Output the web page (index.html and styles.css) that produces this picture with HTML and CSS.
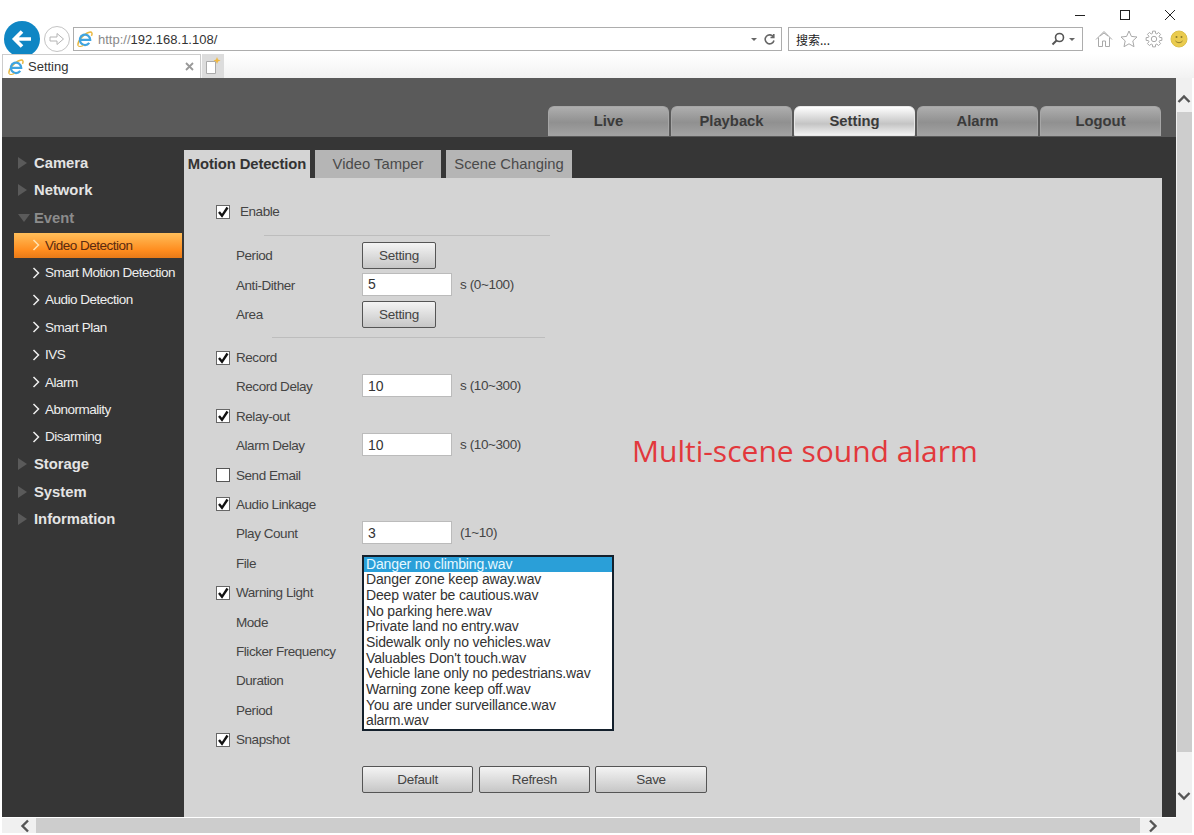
FILE: index.html
```html
<!DOCTYPE html>
<html>
<head>
<meta charset="utf-8">
<title>Setting</title>
<link rel="stylesheet" href="styles.css">
</head>
<body>

<svg class="defs" width="0" height="0">
  <symbol id="ie" viewBox="0 0 20 20">
    <path d="M1.500 18.500C-.5 14 8 3.500 15.500 1.500c3.500-.8 4 2 2.500 4.500" fill="none" stroke="#e9b840" stroke-width="1.800"/>
    <path d="M4 11H16.500A6.500 6.500 0 1 0 15.300 14.800" fill="none" stroke="#3fa4e0" stroke-width="2.800"/>
    <path d="M1.500 18.500C3 20 6 19 8 18" fill="none" stroke="#e9b840" stroke-width="1.400"/>
  </symbol>
  <symbol id="tick" viewBox="0 0 14 14">
    <rect x=".5" y=".5" width="13" height="13" fill="#fff" stroke="#666"/>
    <path d="M3 7l3 3.800L11.500 2.500" fill="none" stroke="#111" stroke-width="2.400"/>
  </symbol>
  <symbol id="chev" viewBox="0 0 8 12">
    <path d="M1.500 1l5 5-5 5" fill="none" stroke="currentColor" stroke-width="1.500"/>
  </symbol>
</svg>

<div class="ie-bar">
  <div class="win-btns">
    <svg width="12" height="12" viewBox="0 0 12 12"><path d="M1 6.500h10" stroke="#222"/></svg>
    <svg width="12" height="12" viewBox="0 0 12 12"><rect x="1.500" y="1.500" width="9" height="9" fill="none" stroke="#222"/></svg>
    <svg width="12" height="12" viewBox="0 0 12 12"><path d="M1 1l10 10M11 1L1 11" stroke="#222"/></svg>
  </div>

  <div class="nav-row">
    <div class="back-btn">
      <svg width="24" height="24" viewBox="0 0 24 24"><path d="M21 12H6M12 4.500L4.500 12l7.500 7.500" fill="none" stroke="#fff" stroke-width="3.600"/></svg>
    </div>
    <div class="fwd-btn">
      <svg width="16" height="16" viewBox="0 0 16 16"><path d="M1 6h7V2.500L14.500 8 8 13.500V10H1z" fill="none" stroke="#b4b4b4"/></svg>
    </div>
    <div class="addr-box">
      <svg class="ie-icon" width="16" height="16"><use href="#ie"/></svg>
      <span class="addr-url"><span class="addr-dim">http://</span>192.168.1.108/</span>
      <span class="addr-arrow"></span>
      <svg width="13" height="13" viewBox="0 0 13 13"><path d="M10.500 4A4.500 4.500 0 1 0 11 7.500M10.800 1v3.500H7.500" fill="none" stroke="#666" stroke-width="1.600"/></svg>
    </div>
    <div class="search-box">
      <span class="search-text">搜索...</span>
      <svg width="14" height="14" viewBox="0 0 14 14"><circle cx="8.500" cy="5.500" r="4" fill="none" stroke="#555" stroke-width="1.600"/><path d="M5.500 8.500L1.500 12.500" stroke="#555" stroke-width="2"/></svg>
      <span class="addr-arrow"></span>
    </div>
    <div class="tool-icons">
      <svg width="18" height="18" viewBox="0 0 18 18"><path d="M1 9.500L9 1.500l8 8M3.500 7.500v9h4V11h3v5.500h4v-9M5 6L9 3l4 3" fill="none" stroke="#a9a9a9"/></svg>
      <svg width="18" height="18" viewBox="0 0 18 18"><path d="M9 1l2.400 5.400 5.600.6-4.200 3.900 1.200 5.800L9 13.800l-5 2.900 1.200-5.800L1 7l5.600-.6z" fill="none" stroke="#a9a9a9"/></svg>
      <svg width="18" height="18" viewBox="0 0 18 18"><circle cx="9" cy="9" r="2.700" fill="none" stroke="#a9a9a9"/><path d="M14.580 7.400L16.880 7.610 16.880 10.390 14.580 10.600 14.070 11.810 15.550 13.590 13.590 15.550 11.810 14.070 10.600 14.580 10.390 16.880 7.610 16.880 7.400 14.580 6.190 14.070 4.410 15.550 2.450 13.590 3.930 11.810 3.420 10.600 1.120 10.390 1.120 7.610 3.420 7.400 3.930 6.190 2.450 4.410 4.410 2.450 6.190 3.930 7.400 3.420 7.610 1.120 10.390 1.120 10.600 3.420 11.810 3.930 13.590 2.450 15.550 4.410 14.070 6.190z" fill="none" stroke="#a9a9a9" stroke-linejoin="round"/></svg>
      <svg width="18" height="18" viewBox="0 0 18 18"><circle cx="9" cy="9" r="8" fill="#eacb4e" stroke="#dcc04a"/><circle cx="6.500" cy="7" r="1" fill="#8a7a2a"/><circle cx="11.500" cy="7" r="1" fill="#8a7a2a"/><path d="M5.500 11c2 2.200 5 2.200 7 0" fill="none" stroke="#8a7a2a"/></svg>
    </div>
  </div>

  <div class="tab-row">
    <div class="ie-tab">
      <svg width="16" height="16"><use href="#ie"/></svg>
      <span class="ie-tab-title">Setting</span>
      <svg class="ie-tab-close" width="9" height="9" viewBox="0 0 9 9"><path d="M1 1l7 7M8 1L1 8" stroke="#999" stroke-width="1.800"/></svg>
    </div>
    <div class="new-tab">
      <svg width="16" height="18" viewBox="0 0 16 18"><path d="M1.500 4.500h9v12h-9z" fill="#fff" stroke="#aaa"/><path d="M12 0l1 2.500 2.500 1L13 4.500 12 7l-1-2.500L8.500 3.500 11 2.500z" fill="#f0b840"/></svg>
    </div>
  </div>
</div>

<div class="viewport">
  <div class="page-col">
    <div class="page">
      <div class="top-head">
        <div class="top-tab">Live</div>
        <div class="top-tab">Playback</div>
        <div class="top-tab active">Setting</div>
        <div class="top-tab">Alarm</div>
        <div class="top-tab">Logout</div>
      </div>

      <div class="main">
        <div class="sidebar">
          <div class="menu-head"><span class="tri"></span>Camera</div>
          <div class="menu-head"><span class="tri"></span>Network</div>
          <div class="menu-head open"><span class="tri"></span>Event</div>
          <div class="menu-item active"><svg width="8" height="12"><use href="#chev"/></svg>Video Detection</div>
          <div class="menu-item"><svg width="8" height="12"><use href="#chev"/></svg>Smart Motion Detection</div>
          <div class="menu-item"><svg width="8" height="12"><use href="#chev"/></svg>Audio Detection</div>
          <div class="menu-item"><svg width="8" height="12"><use href="#chev"/></svg>Smart Plan</div>
          <div class="menu-item"><svg width="8" height="12"><use href="#chev"/></svg>IVS</div>
          <div class="menu-item"><svg width="8" height="12"><use href="#chev"/></svg>Alarm</div>
          <div class="menu-item"><svg width="8" height="12"><use href="#chev"/></svg>Abnormality</div>
          <div class="menu-item"><svg width="8" height="12"><use href="#chev"/></svg>Disarming</div>
          <div class="menu-head"><span class="tri"></span>Storage</div>
          <div class="menu-head"><span class="tri"></span>System</div>
          <div class="menu-head"><span class="tri"></span>Information</div>
        </div>

        <div class="content">
          <div class="sub-tabs">
            <div class="sub-tab active">Motion Detection</div>
            <div class="sub-tab">Video Tamper</div>
            <div class="sub-tab">Scene Changing</div>
          </div>

          <div class="panel">
            <div class="note">Multi-scene sound alarm</div>

            <div class="row">
              <span class="check"><svg width="14" height="14"><use href="#tick"/></svg></span>
              <span class="label enable-label">Enable</span>
            </div>
            <div class="divider first"></div>
            <div class="row">
              <span class="check"></span><span class="label">Period</span>
              <button class="btn btn-small">Setting</button>
            </div>
            <div class="row">
              <span class="check"></span><span class="label">Anti-Dither</span>
              <input class="num-input" value="5"><span class="hint">s (0~100)</span>
            </div>
            <div class="row">
              <span class="check"></span><span class="label">Area</span>
              <button class="btn btn-small">Setting</button>
            </div>
            <div class="divider second"></div>
            <div class="row">
              <span class="check"><svg width="14" height="14"><use href="#tick"/></svg></span>
              <span class="label">Record</span>
            </div>
            <div class="row">
              <span class="check"></span><span class="label">Record Delay</span>
              <input class="num-input" value="10"><span class="hint">s (10~300)</span>
            </div>
            <div class="row">
              <span class="check"><svg width="14" height="14"><use href="#tick"/></svg></span>
              <span class="label">Relay-out</span>
            </div>
            <div class="row">
              <span class="check"></span><span class="label">Alarm Delay</span>
              <input class="num-input" value="10"><span class="hint">s (10~300)</span>
            </div>
            <div class="row">
              <span class="check"><span class="empty-box"></span></span>
              <span class="label">Send Email</span>
            </div>
            <div class="row">
              <span class="check"><svg width="14" height="14"><use href="#tick"/></svg></span>
              <span class="label">Audio Linkage</span>
            </div>
            <div class="row">
              <span class="check"></span><span class="label">Play Count</span>
              <input class="num-input" value="3"><span class="hint">(1~10)</span>
            </div>
            <div class="row file-row">
              <span class="check"></span><span class="label">File</span>
              <ul class="file-list">
                <li class="selected">Danger no climbing.wav</li>
                <li>Danger zone keep away.wav</li>
                <li>Deep water be cautious.wav</li>
                <li>No parking here.wav</li>
                <li>Private land no entry.wav</li>
                <li>Sidewalk only no vehicles.wav</li>
                <li>Valuables Don't touch.wav</li>
                <li>Vehicle lane only no pedestrians.wav</li>
                <li>Warning zone keep off.wav</li>
                <li>You are under surveillance.wav</li>
                <li>alarm.wav</li>
              </ul>
            </div>
            <div class="row">
              <span class="check"><svg width="14" height="14"><use href="#tick"/></svg></span>
              <span class="label">Warning Light</span>
            </div>
            <div class="row"><span class="check"></span><span class="label">Mode</span></div>
            <div class="row"><span class="check"></span><span class="label">Flicker Frequency</span></div>
            <div class="row"><span class="check"></span><span class="label">Duration</span></div>
            <div class="row"><span class="check"></span><span class="label">Period</span></div>
            <div class="row">
              <span class="check"><svg width="14" height="14"><use href="#tick"/></svg></span>
              <span class="label">Snapshot</span>
            </div>

            <div class="actions">
              <button class="btn btn-wide">Default</button>
              <button class="btn btn-wide">Refresh</button>
              <button class="btn btn-wide">Save</button>
            </div>
          </div>
        </div>
      </div>
    </div>

    <div class="hscroll">
      <svg class="sb-arrow" width="10" height="14" viewBox="0 0 10 14"><path d="M8 1.500L2.500 7 8 12.500" fill="none" stroke="#555" stroke-width="2.400"/></svg>
      <div class="hscroll-thumb"></div>
      <svg class="sb-arrow" width="10" height="14" viewBox="0 0 10 14"><path d="M2 1.500L7.500 7 2 12.500" fill="none" stroke="#555" stroke-width="2.400"/></svg>
    </div>
  </div>

  <div class="vscroll">
    <svg width="14" height="10" viewBox="0 0 14 10"><path d="M1.500 8L7 2.500 12.500 8" fill="none" stroke="#555" stroke-width="2.400"/></svg>
    <div class="vscroll-thumb"></div>
    <svg width="14" height="10" viewBox="0 0 14 10"><path d="M1.500 2L7 7.500 12.500 2" fill="none" stroke="#555" stroke-width="2.400"/></svg>
  </div>
</div>

</body>
</html>
```

FILE: styles.css
```css
* {
  box-sizing: border-box;
}

html, body {
  margin: 0;
  height: 100%;
  overflow: hidden;
  background-color: #fff;
  font-family: "Liberation Sans", Arial, sans-serif;
  font-size: 13.500px;
  color: #444;
}

.defs {
  position: absolute;
}

/* browser chrome */
.ie-bar {
  height: 78px;
  padding-left: 2px;
}

.win-btns {
  display: flex;
  justify-content: flex-end;
  gap: 33px;
  height: 27px;
  padding: 9px 18px 0 0;
}

.nav-row {
  display: flex;
  align-items: center;
  height: 24px;
}

.back-btn {
  display: flex;
  align-items: center;
  justify-content: center;
  flex: none;
  width: 36px;
  height: 36px;
  margin: 0 4px 0 2px;
  border-radius: 50%;
  background-color: #0f86c4;
}

.fwd-btn {
  display: flex;
  align-items: center;
  justify-content: center;
  flex: none;
  width: 26px;
  height: 26px;
  margin-right: 3px;
  border: 1px solid #c4c4c4;
  border-radius: 50%;
}

.addr-box, .search-box {
  display: flex;
  align-items: center;
  flex: none;
  height: 24px;
  border: 1px solid #adadad;
  background-color: #fff;
}

.addr-box {
  width: 709px;
  padding: 0 5px 0 3px;
}

.ie-icon {
  flex: none;
  margin-right: 5px;
}

.addr-url {
  flex: 1;
  font-size: 13px;
  color: #333;
}

.addr-dim {
  color: #888;
}

.addr-arrow {
  width: 0;
  height: 0;
  margin: 0 6px 0 4px;
  border-left: 3px solid transparent;
  border-right: 3px solid transparent;
  border-top: 3px solid #666;
}

.search-box {
  width: 295px;
  margin-left: 6px;
  padding-left: 7px;
}

.search-text {
  flex: 1;
  font-family: "Noto Sans CJK SC", sans-serif;
  font-size: 12px;
  color: #222;
}

.search-box .addr-arrow {
  margin: 0 7px 0 4px;
}

.tool-icons {
  display: flex;
  gap: 7px;
  margin-left: 12px;
}

.tab-row {
  display: flex;
  height: 24px;
  margin-top: 3px;
  background: linear-gradient(to bottom, #fff, #f2f2f2);
}

.ie-tab {
  display: flex;
  align-items: center;
  width: 199px;
  padding: 0 6px 0 5px;
  border: 1px solid #ccc;
  border-bottom: 0;
  background-color: #fff;
}

.ie-tab-title {
  flex: 1;
  margin-left: 4px;
  font-size: 13px;
  color: #333;
}

.new-tab {
  display: flex;
  align-items: center;
  justify-content: center;
  width: 22px;
  margin-left: 1px;
  background-color: #dcdcdc;
}

/* page in the frame */
.viewport {
  display: flex;
  height: 755px;
  margin: 0 2px;
}

.page-col {
  flex: 1;
  min-width: 0;
}

.page {
  display: flex;
  flex-direction: column;
  height: 739px;
  overflow: hidden;
  background-color: #363636;
}

.top-head {
  display: flex;
  justify-content: flex-end;
  align-items: flex-end;
  gap: 2px;
  flex: none;
  height: 59px;
  padding: 0 15px 1px 0;
  background-color: #5a5a5a;
}

.top-tab {
  width: 121px;
  height: 30px;
  border: 1px solid #a6a6a6;
  border-bottom-color: #a2a2a2;
  border-radius: 6px 6px 0 0;
  background: linear-gradient(to bottom, #aeaeae, #909090 55%, #a2a2a2);
  font-size: 14.800px;
  font-weight: bold;
  line-height: 28px;
  text-align: center;
  color: #3a3a3a;
}

.top-tab.active {
  border-color: #e8e8e8;
  background: linear-gradient(to bottom, #fff, #c4c4c4 60%, #f2f2f2);
}

.main {
  display: flex;
  flex: 1;
  min-height: 0;
}

.sidebar {
  flex: none;
  width: 182px;
  padding-top: 12.300px;
}

.menu-head {
  display: flex;
  align-items: center;
  height: 27.400px;
  padding-left: 16px;
  font-size: 14.800px;
  font-weight: bold;
  color: #e4e4e4;
}

.menu-head .tri {
  width: 0;
  height: 0;
  margin-right: 7px;
  border-top: 6px solid transparent;
  border-bottom: 6px solid transparent;
  border-left: 9px solid #5a5a5a;
}

.menu-head.open {
  color: #8c8c8c;
}

.menu-head.open .tri {
  margin-left: 0;
  margin-right: 4px;
  border-left: 6px solid transparent;
  border-right: 6px solid transparent;
  border-top: 8px solid #5a5a5a;
  border-bottom: 0;
}

.menu-item {
  display: flex;
  align-items: center;
  gap: 5px;
  height: 27.400px;
  margin-left: 12px;
  padding-left: 18px;
  letter-spacing: -0.5px;
  color: #eee;
}

.menu-item.active {
  height: 25px;
  margin: 1.200px 2px 1.200px 12px;
  background: linear-gradient(to bottom, #ffbe5a, #ff8c1e 70%, #e87a18);
  color: #5a2a10;
}

.menu-item.active svg {
  color: #ffe2b0;
}

.content {
  flex: 1;
  display: flex;
  flex-direction: column;
  min-width: 0;
  padding: 13px 14px 0 0;
}

.sub-tabs {
  display: flex;
  gap: 5px;
  flex: none;
  height: 28px;
}

.sub-tab {
  width: 126px;
  background-color: #b5b5b5;
  font-size: 14.800px;
  line-height: 28px;
  text-align: center;
  color: #4a4a4a;
}

.sub-tab.active {
  background-color: #d4d4d4;
  font-weight: bold;
  letter-spacing: -0.1px;
  color: #333;
}

.panel {
  position: relative;
  flex: 1;
  padding: 19.100px 0 0 32px;
  background-color: #d4d4d4;
}

.note {
  position: absolute;
  left: 448px;
  top: 252px;
  font-family: "Open Sans", sans-serif;
  font-size: 30px;
  color: #e2383c;
}

.row {
  display: flex;
  align-items: center;
  height: 29.400px;
}

.check {
  display: flex;
  flex: none;
  width: 20px;
}

.empty-box {
  width: 14px;
  height: 14px;
  border: 1px solid #555;
  background-color: #fff;
}

.label {
  flex: none;
  width: 126px;
  letter-spacing: -0.45px;
}

.enable-label {
  margin-left: 4px;
}

.divider {
  height: 1px;
  background-color: #bdbdbd;
}

.divider.first {
  width: 286px;
  margin: 9px 0 4.600px 48px;
}

.divider.second {
  width: 273px;
  margin: 8px 0 4.600px 56px;
}

.btn {
  height: 27px;
  padding: 0;
  border: 1px solid #555;
  border-radius: 2px;
  background: linear-gradient(to bottom, #f4f4f4, #c6c6c6);
  font-family: "Liberation Sans", Arial, sans-serif;
  font-size: 13.500px;
  letter-spacing: -0.3px;
  color: #444;
}

.btn-small {
  width: 74px;
}

.btn-wide {
  width: 111.300px;
}

.num-input {
  width: 90px;
  height: 23px;
  margin-bottom: 2px;
  padding: 0 5px;
  border: 1px solid #bbb;
  background-color: #fff;
  font-family: "Liberation Sans", Arial, sans-serif;
  font-size: 14px;
  color: #333;
}

.hint {
  margin: 0 0 2px 8px;
  letter-spacing: -0.4px;
}

.file-row {
  position: relative;
}

.file-list {
  position: absolute;
  left: 146px;
  top: 6px;
  width: 252px;
  height: 176px;
  margin: 0;
  padding: 0;
  list-style: none;
  border: 2px solid #14202c;
  background-color: #fff;
  font-size: 14px;
  letter-spacing: -0.14px;
  line-height: 15.700px;
  color: #333;
}

.file-list li {
  height: 15.700px;
  padding-left: 2px;
}

.file-list .selected {
  background-color: #2a9fd8;
  color: #e6f8ff;
}

.actions {
  display: flex;
  gap: 5.400px;
  margin: 11.800px 0 0 146px;
}

/* scrollbars */
.hscroll {
  display: flex;
  align-items: center;
  height: 16px;
  background-color: #f0f0f0;
  border-top: 1px solid #fff;
}

.sb-arrow {
  flex: none;
  margin: 0 6px 0 18px;
}

.hscroll-thumb {
  flex: none;
  width: 1104px;
  height: 15px;
  background-color: #cdcdcd;
}

.hscroll .sb-arrow:last-child {
  margin: 0 0 0 8px;
}

.vscroll {
  display: flex;
  flex-direction: column;
  align-items: center;
  flex: none;
  width: 16px;
  padding-top: 16px;
  background-color: #f0f0f0;
}

.vscroll-thumb {
  flex: none;
  width: 15px;
  height: 640px;
  margin: 8px 0 39px;
  background-color: #cdcdcd;
}
```
